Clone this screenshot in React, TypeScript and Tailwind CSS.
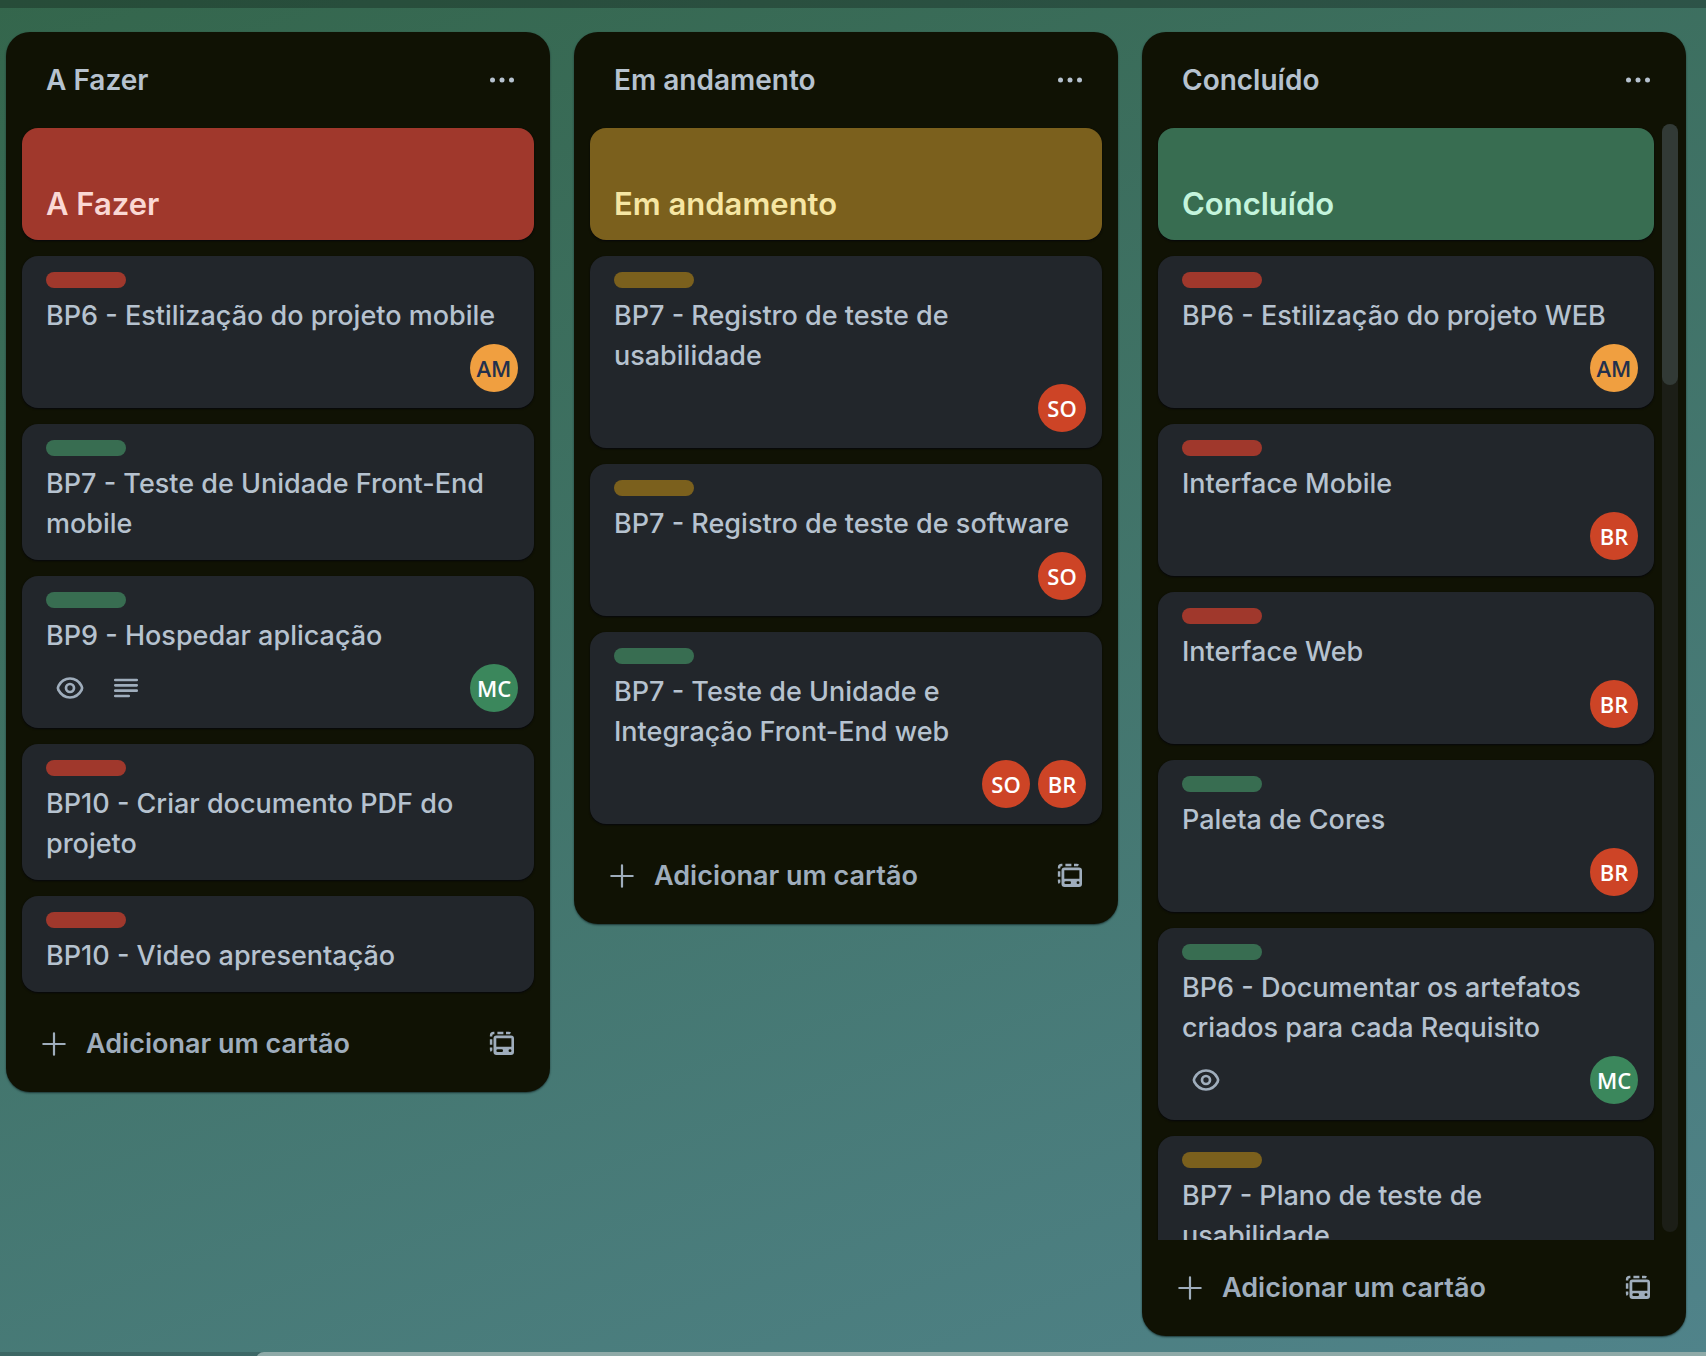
type Tone = "red" | "yellow" | "green";
type Member = "AM" | "SO" | "BR" | "MC";
type Badge = "watch" | "description";

interface CardData {
  label: Tone;
  title: string;
  badges?: Badge[];
  members?: Member[];
}

interface ListData {
  name: string;
  tone: Tone;
  scrolls?: boolean;
  cards: CardData[];
}

const labelTone: Record<Tone, string> = {
  red: "bg-[#a0382c]",
  yellow: "bg-[#7b601d]",
  green: "bg-[#386d51]",
};

const coverTone: Record<Tone, string> = {
  red: "bg-[#a0382c] text-[#fad8d4]",
  yellow: "bg-[#7b601d] text-[#f6e6a3]",
  green: "bg-[#386d51] text-[#c4f4dc]",
};

const memberTone: Record<Member, string> = {
  AM: "bg-[#f09f40] text-[#23304d]",
  SO: "bg-[#cd4426] text-white",
  BR: "bg-[#cd4426] text-white",
  MC: "bg-[#3b875c] text-white",
};

const lists: ListData[] = [
  {
    name: "A Fazer",
    tone: "red",
    cards: [
      { label: "red", title: "BP6 - Estilização do projeto mobile", members: ["AM"] },
      { label: "green", title: "BP7 - Teste de Unidade Front-End mobile" },
      {
        label: "green",
        title: "BP9 - Hospedar aplicação",
        badges: ["watch", "description"],
        members: ["MC"],
      },
      { label: "red", title: "BP10 - Criar documento PDF do projeto" },
      { label: "red", title: "BP10 - Video apresentação" },
    ],
  },
  {
    name: "Em andamento",
    tone: "yellow",
    cards: [
      { label: "yellow", title: "BP7 - Registro de teste de usabilidade", members: ["SO"] },
      { label: "yellow", title: "BP7 - Registro de teste de software", members: ["SO"] },
      {
        label: "green",
        title: "BP7 - Teste de Unidade e Integração Front-End web",
        members: ["SO", "BR"],
      },
    ],
  },
  {
    name: "Concluído",
    tone: "green",
    scrolls: true,
    cards: [
      { label: "red", title: "BP6 - Estilização do projeto WEB", members: ["AM"] },
      { label: "red", title: "Interface Mobile", members: ["BR"] },
      { label: "red", title: "Interface Web", members: ["BR"] },
      { label: "green", title: "Paleta de Cores", members: ["BR"] },
      {
        label: "green",
        title: "BP6 - Documentar os artefatos criados para cada Requisito",
        badges: ["watch"],
        members: ["MC"],
      },
      { label: "yellow", title: "BP7 - Plano de teste de usabilidade" },
    ],
  },
];

function DotsIcon() {
  return (
    <svg viewBox="0 0 32 32" className="size-8" fill="currentColor" aria-hidden="true">
      <circle cx="6.5" cy="16" r="2.5" />
      <circle cx="16" cy="16" r="2.5" />
      <circle cx="25.5" cy="16" r="2.5" />
    </svg>
  );
}

function PlusIcon() {
  return (
    <svg
      viewBox="0 0 32 32"
      className="size-8 shrink-0"
      fill="none"
      stroke="currentColor"
      strokeWidth="2.2"
      strokeLinecap="round"
      aria-hidden="true"
    >
      <path d="M16 5.3v21.4M5.3 16h21.4" />
    </svg>
  );
}

function TemplateIcon() {
  return (
    <svg viewBox="0 0 32 32" className="size-8" aria-hidden="true">
      <path
        d="M5.1 8.6V7.6a2.5 2.5 0 0 1 2.5-2.5h.8M11.4 5.1h6M20 5.1h2.6a2 2 0 0 1 1.600.6M5.100 11.200v5.600M5.100 19.600v2a2 2 0 0 0 .6 1.400"
        fill="none"
        stroke="currentColor"
        strokeWidth="2.5"
      />
      <path
        fill="currentColor"
        fillRule="evenodd"
        d="M10.500 7.500H25a3 3 0 0 1 3 3V24a3 3 0 0 1-3 3H10.500a3 3 0 0 1-3-3V10.500a3 3 0 0 1 3-3ZM10.300 10.300v8.400h15.100v-8.400ZM11.700 21.300a1.350 1.350 0 0 0 0 2.700h4a1.350 1.350 0 0 0 0-2.700ZM24 21.200a1.450 1.450 0 1 0 0 2.900a1.450 1.450 0 0 0 0-2.900Z"
      />
    </svg>
  );
}

function WatchIcon() {
  return (
    <svg
      viewBox="0 0 32 32"
      className="size-8"
      fill="none"
      stroke="currentColor"
      strokeWidth="2.7"
      role="img"
      aria-label="Seguindo este cartão"
    >
      <path d="M16 6.500c5 0 9 2.700 11.500 7.300a4.400 4.400 0 0 1 0 4.400C25 22.800 21 25.500 16 25.500S7 22.800 4.500 18.200a4.400 4.400 0 0 1 0-4.400C7 9.200 11 6.500 16 6.500Z" />
      <circle cx="16" cy="16" r="4" />
    </svg>
  );
}

function DescriptionIcon() {
  return (
    <svg
      viewBox="0 0 32 32"
      className="size-8"
      fill="none"
      stroke="currentColor"
      strokeWidth="2.7"
      strokeLinecap="round"
      role="img"
      aria-label="Este cartão tem uma descrição"
    >
      <path d="M5.300 8h21.400M5.300 13.300h21.400M5.300 18.700h21.400M5.300 24h13.400" />
    </svg>
  );
}

function Card({ card }: { card: CardData }) {
  const hasFooter = Boolean(card.badges?.length || card.members?.length);
  return (
    <li className="shrink-0 rounded-2xl bg-[#22262b] py-4 pr-4 pl-6 shadow-[0_1px_2px_#06070b]">
      <span className={`block h-4 w-20 rounded-lg ${labelTone[card.label]}`} />
      <h3 className="mt-2 pr-2 text-[27px] leading-10 font-medium text-[#b6c2cf]">{card.title}</h3>
      {hasFooter && (
        <div className="mt-2 flex items-center justify-between">
          <div className="flex gap-6 pl-2 text-[#9fadbc]">
            {card.badges?.map((badge) =>
              badge === "watch" ? <WatchIcon key={badge} /> : <DescriptionIcon key={badge} />,
            )}
          </div>
          <div className="flex gap-2">
            {card.members?.map((member) => (
              <span
                key={member}
                className={`flex size-12 items-center justify-center rounded-full font-['Open_Sans',sans-serif] text-[22px] font-semibold ${memberTone[member]}`}
              >
                {member}
              </span>
            ))}
          </div>
        </div>
      )}
    </li>
  );
}

function List({ list }: { list: ListData }) {
  return (
    <section className="flex max-h-full min-w-0 flex-1 flex-col rounded-3xl bg-[#101204] shadow-[0_1px_2px_#1c3535]">
      <header className="flex h-23 shrink-0 items-center justify-between pt-1 pr-8 pl-10">
        <h2 className="text-[28px] leading-10 font-semibold text-[#b6c2cf]">{list.name}</h2>
        <button type="button" aria-label={`Ações da lista ${list.name}`} className="text-[#b6c2cf]">
          <DotsIcon />
        </button>
      </header>

      <div className="flex min-h-0">
        <ul
          className={`flex min-w-0 flex-1 flex-col gap-4 overflow-y-auto py-1 pl-4 [scrollbar-width:none] ${
            list.scrolls ? "pr-2" : "pr-4"
          }`}
        >
          <li
            className={`flex h-28 shrink-0 items-end rounded-2xl px-6 pb-4 text-[31px] leading-10 font-semibold shadow-[0_1px_2px_#06070b] ${coverTone[list.tone]}`}
          >
            {list.name}
          </li>
          {list.cards.map((card) => (
            <Card key={card.title} card={card} />
          ))}
        </ul>
        {list.scrolls && (
          <div className="mr-2 mb-2 w-4 shrink-0 rounded-full bg-[#1c1e17]">
            <div className="h-[23.6%] rounded-full bg-[#323a36]" />
          </div>
        )}
      </div>

      <footer className="flex shrink-0 items-center justify-between py-4 pr-8 pl-8 text-[#9fadbc]">
        <button
          type="button"
          className="flex h-16 items-center gap-4 text-[27px] leading-10 font-semibold"
        >
          <PlusIcon />
          Adicionar um cartão
        </button>
        <button type="button" aria-label="Criar a partir de modelo">
          <TemplateIcon />
        </button>
      </footer>
    </section>
  );
}

export default function App() {
  return (
    <div className="flex h-screen flex-col overflow-hidden bg-linear-[160deg,#34664c,#50838a] font-[Inter,sans-serif]">
      <div className="h-2 shrink-0 bg-black/25" />
      <main className="flex min-h-0 flex-1 items-start gap-6 pt-6 pr-5 pb-4 pl-1.5">
        {lists.map((list) => (
          <List key={list.name} list={list} />
        ))}
      </main>
      <div className="flex h-1 shrink-0 justify-end overflow-hidden bg-black/15">
        <div className="h-4 w-[85%] rounded-l-full bg-[#8faaa8]" />
      </div>
    </div>
  );
}
